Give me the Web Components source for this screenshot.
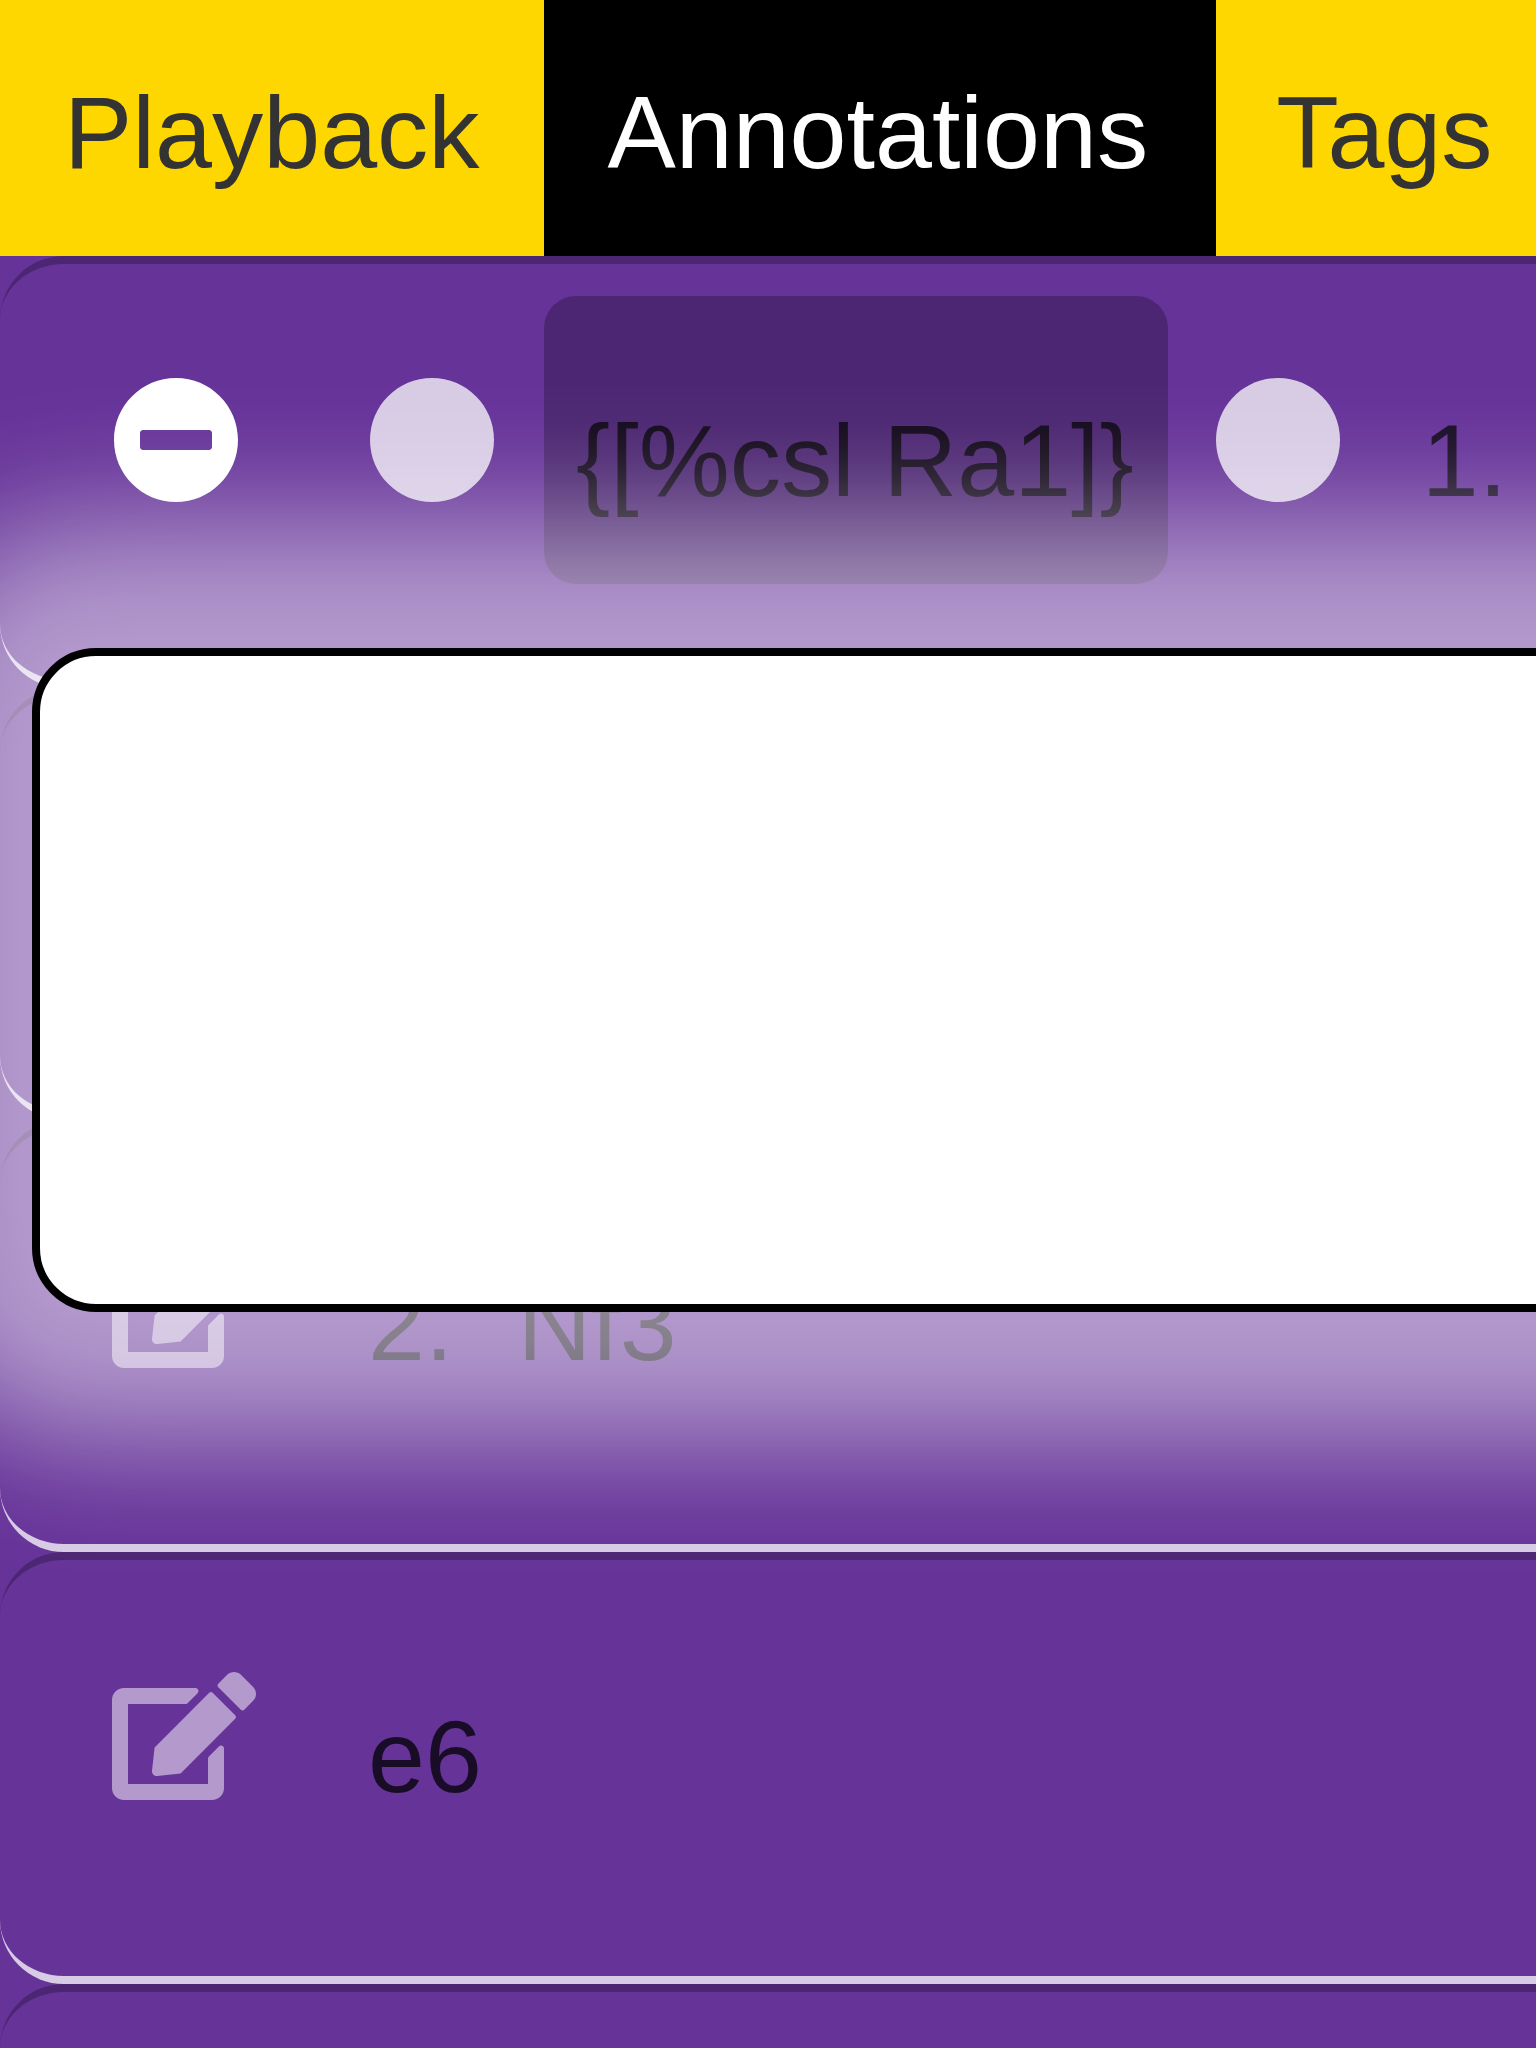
<!DOCTYPE html>
<html lang="en">
<head>
<meta charset="utf-8">
<title>Annotations</title>
<style>
html, body { margin: 0; width: 1536px; height: 2048px; overflow: hidden; background: #663399; }
body { font-family: "Liberation Sans", Arial, sans-serif; font-size: 102.4px; }
</style>
</head>
<body>
<annotation-app></annotation-app>
<script>
const define = (name, html, setup) => customElements.define(name, class extends HTMLElement {
  constructor() {
    super();
    this.attachShadow({ mode: "open" }).innerHTML = html;
  }
  connectedCallback() { if (setup) setup(this); }
});

const CIRCLE = "M256 8C119 8 8 119 8 256s111 248 248 248 248-111 248-248S393 8 256 8z";
const ICONS = {
  circle: [512, CIRCLE],
  minus: [512, CIRCLE + "M124 296c-6.6 0-12-5.4-12-12v-56c0-6.6 5.4-12 12-12h264c6.6 0 12 5.4 12 12v56c0 6.6-5.4 12-12 12H124z"],
  edit: [576, "M402.6 83.2l90.2 90.2c3.8 3.8 3.8 10 0 13.8L274.4 405.6l-92.8 10.3c-12.4 1.4-22.9-9.1-21.5-21.5l10.3-92.8L388.8 83.2c3.8-3.8 10-3.8 13.8 0zm162-22.9l-48.8-48.8c-15.2-15.2-39.9-15.2-55.2 0l-35.4 35.4c-3.8 3.8-3.8 10 0 13.8l90.2 90.2c3.8 3.8 10 3.8 13.8 0l35.4-35.4c15.2-15.3 15.2-40 0-55.2zM384 346.2V448H64V128h229.8c3.2 0 6.2-1.3 8.5-3.5l40-40c7.6-7.6 2.2-20.5-8.5-20.5H48C21.5 64 0 85.5 0 112v352c0 26.5 21.5 48 48 48h352c26.5 0 48-21.5 48-48V306.2c0-10.7-12.9-16-20.5-8.5l-40 40c-2.2 2.3-3.5 5.3-3.5 8.5z"]
};

define("app-icon", `<style>
  :host { display: block; flex: none; height: 128px; color: #fff; }
  svg { display: block; height: 128px; fill: currentColor; fill-rule: evenodd; }
</style><svg><path/></svg>`, el => {
  const [w, d] = ICONS[el.getAttribute("name")];
  const svg = el.shadowRoot.querySelector("svg");
  svg.setAttribute("viewBox", `0 0 ${w} 512`);
  svg.style.width = w / 4 + "px";
  svg.firstElementChild.setAttribute("d", d);
});

define("app-tab", `<style>
  :host { display: block; flex: none; box-sizing: border-box; height: 256px; padding-top: 9px; padding-left: 64px;
    line-height: 247px; background: #ffd700; color: #333; white-space: nowrap; }
  :host([active]) { background: #000; color: #fff; }
</style><slot></slot>`);

define("move-label", `<style>
  :host { display: block; flex: none; box-sizing: border-box; height: 288px; padding-top: 41px;
    line-height: 247px; color: rgba(0,0,0,.75); white-space: nowrap; }
  :host([selected]) { width: 624px; padding-left: 32px; background: rgba(0,0,0,.25); border-radius: 32px; }
</style><slot></slot>`);

define("annotation-row", `<style>
  :host { display: flex; box-sizing: border-box; height: 432px; padding-top: 32px; border-radius: 64px;
    border-top: 8px solid rgba(0,0,0,.25); border-bottom: 8px solid rgba(255,255,255,.75); width: 1800px; }
  .lead { width: 256px; height: 288px; margin-left: 112px; flex: none; display: flex; align-items: center; }
  .body { display: flex; align-items: center; height: 288px; }
</style><div class="lead"><slot name="lead"></slot></div><div class="body"><slot></slot></div>`);

define("app-dialog", `<style>
  :host { display: block; position: absolute; left: 32px; top: 648px; width: 2000px; height: 664px; box-sizing: border-box;
    background: #fff; border: 8px solid #000; border-radius: 64px; box-shadow: 0 0 128px 128px rgba(255,255,255,.5); }
</style><slot></slot>`);

define("annotation-app", `<style>
  :host { display: block; position: relative; width: 1536px; height: 2048px; overflow: hidden; background: #663399; }
  nav { display: flex; height: 256px; }
  .playback { width: 544px; }
  .annotations { width: 672px; padding-left: 63.4px; }
  .tags { width: 320px; padding-left: 60.2px; }
  .faint { opacity: .5; }
  .soft { opacity: .75; }
  .selected { margin-left: 48px; }
  .next { margin-left: 45.8px; }
  .after { margin-left: 80px; }
  .gap { margin-left: 64px; }
</style>
<nav>
  <app-tab class="playback">Playback</app-tab>
  <app-tab class="annotations" active>Annotations</app-tab>
  <app-tab class="tags">Tags</app-tab>
</nav>
<main>
  <annotation-row>
    <app-icon slot="lead" name="minus"></app-icon>
    <app-icon class="soft" name="circle"></app-icon>
    <move-label class="selected" selected>{[%csl Ra1]}</move-label>
    <app-icon class="soft next" name="circle"></app-icon>
    <move-label class="after">1.</move-label>
  </annotation-row>
  <annotation-row></annotation-row>
  <annotation-row>
    <app-icon class="faint" slot="lead" name="edit"></app-icon>
    <move-label>2.</move-label>
    <move-label class="gap">Nf3</move-label>
  </annotation-row>
  <annotation-row>
    <app-icon class="faint" slot="lead" name="edit"></app-icon>
    <move-label>e6</move-label>
  </annotation-row>
  <annotation-row></annotation-row>
</main>
<app-dialog></app-dialog>`);
</script>
</body>
</html>
